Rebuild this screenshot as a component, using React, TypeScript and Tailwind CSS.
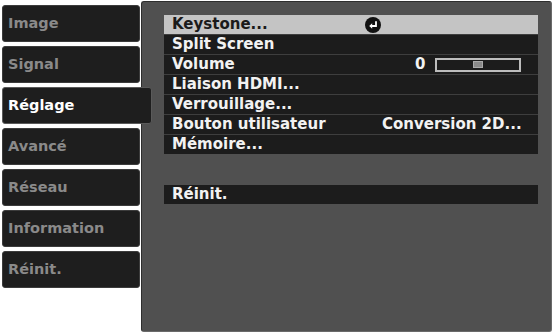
import React from "react";

const tabs = ["Image", "Signal", "Réglage", "Avancé", "Réseau", "Information", "Réinit."];

function EnterIcon() {
  return (
    <svg width="16" height="16" viewBox="0 0 16 16">
      <circle cx="8" cy="8" r="8" fill="#111" />
      <path d="M11 4.2 V9 H5.8" stroke="#fff" strokeWidth="1.8" fill="none" strokeLinejoin="miter" />
      <path d="M4.2 9 L7.2 6.2 V11.8 Z" fill="#fff" />
    </svg>
  );
}

function Row({ label, right, active }: { label: string; right?: React.ReactNode; active?: boolean }) {
  return (
    <div
      className={`h-[19px] flex items-center pl-[8px] ${active ? "bg-[#c4c4c4] text-[#1a1a1a]" : "bg-[#1c1c1c] text-[#f2f2f2]"}`}
    >
      <span className="w-[210px] whitespace-nowrap">{label}</span>
      {right}
    </div>
  );
}

export default function App() {
  return (
    <div
      className="w-[555px] h-[335px] bg-white flex overflow-hidden"
      style={{ fontFamily: '"DejaVu Sans", "Liberation Sans", sans-serif' }}
    >
      <div className="w-[139px] ml-[2px] pt-[5px] flex flex-col gap-[4px] relative z-10">
        {tabs.map((t) => {
          const sel = t === "Réglage";
          return (
            <div
              key={t}
              className={`h-[37px] flex items-center pl-[5px] rounded-[3px] bg-[#1e1e1e] border border-[#3c3c3c] font-bold text-[14.5px] ${
                sel ? "w-[150px] text-white border-[#5a5a5a]" : "w-[138px] text-[#8a8a8a]"
              }`}
            >
              {t}
            </div>
          );
        })}
      </div>
      <div className="mt-[1px] w-[411px] h-[331px] bg-[#505050] border border-[#2e2e2e] border-r-[#6a6a6a] border-b-[#6a6a6a] rounded-[3px] pl-[22px] pt-[13px] font-bold text-[15px] leading-none">
        <div className="w-[374px] flex flex-col gap-[1px] bg-[#3e3e3e]">
          <Row
            label="Keystone..."
            active
            right={
              <span className="flex items-center ml-[-17px]">
                <EnterIcon />
              </span>
            }
          />
          <Row label="Split Screen" />
          <Row
            label="Volume"
            right={
              <span className="flex items-center">
                <span className="ml-[33px] w-[10px]">0</span>
                <span className="ml-[10px] w-[86px] h-[14px] border-2 border-[#bdbdbd] bg-[#1c1c1c] flex items-center justify-center">
                  <span className="block w-[10px] h-[7px] bg-[#8a8a8a] border border-[#aaa]" />
                </span>
              </span>
            }
          />
          <Row label="Liaison HDMI..." />
          <Row label="Verrouillage..." />
          <Row label="Bouton utilisateur" right={<span className="whitespace-nowrap">Conversion 2D...</span>} />
          <Row label="Mémoire..." />
        </div>
        <div className="w-[374px] mt-[31px]">
          <Row label="Réinit." />
        </div>
      </div>
    </div>
  );
}
